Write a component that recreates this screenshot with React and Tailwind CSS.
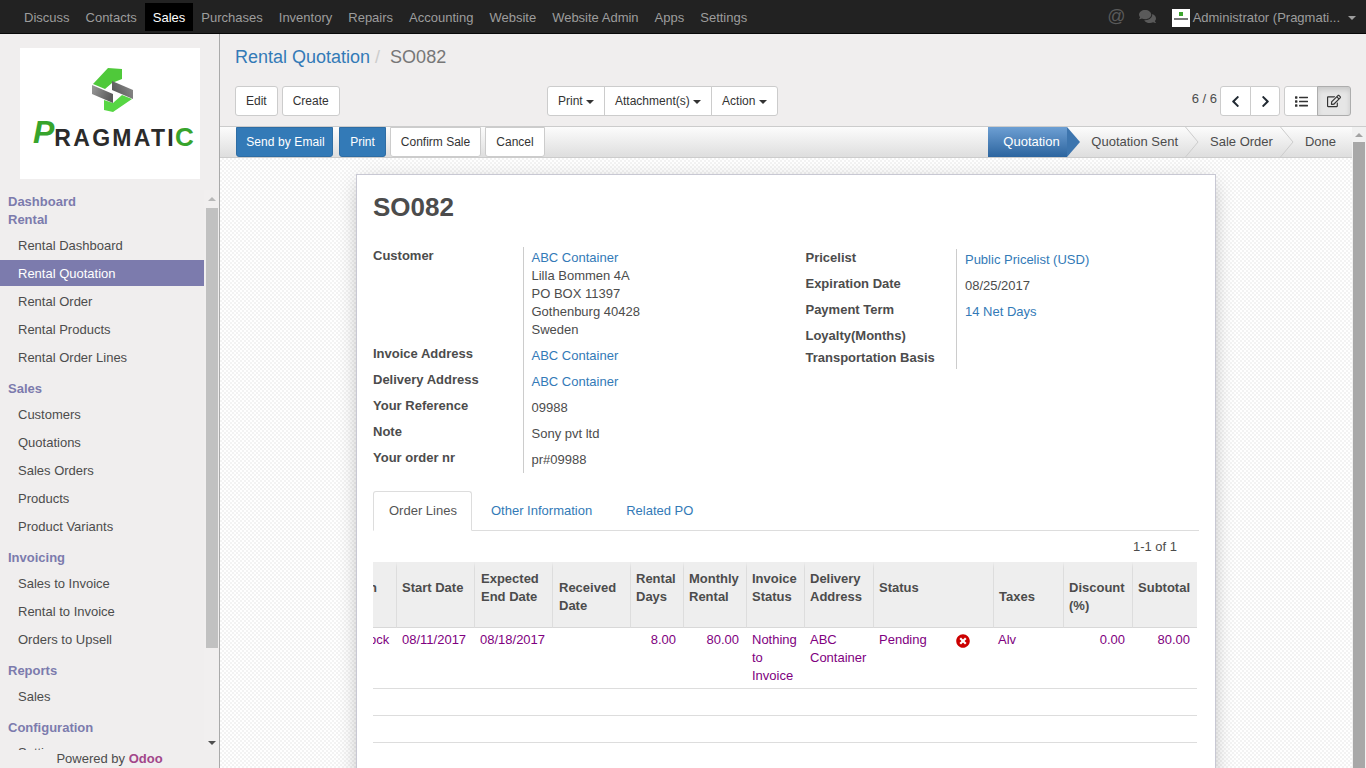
import React from "react";
import { FaComments, FaList, FaRegEdit, FaChevronLeft, FaChevronRight, FaTimesCircle } from "react-icons/fa";

const Caret = ({ cls = "" }) => <span className={`inline-block w-0 h-0 border-x-[4px] border-x-transparent border-t-[4px] border-t-current ${cls}`} />;

const navItems = ["Discuss", "Contacts", "Sales", "Purchases", "Inventory", "Repairs", "Accounting", "Website", "Website Admin", "Apps", "Settings"];

const menu = [
  { h: "Dashboard", cls: "h-[18px] mt-[2px]" },
  { h: "Rental", cls: "h-[18px]" },
  { i: "Rental Dashboard", top: "mt-[3px]" },
  { i: "Rental Quotation", active: true },
  { i: "Rental Order" },
  { i: "Rental Products" },
  { i: "Rental Order Lines" },
  { h: "Sales" },
  { i: "Customers", top: "mt-[3px]" },
  { i: "Quotations" },
  { i: "Sales Orders" },
  { i: "Products" },
  { i: "Product Variants" },
  { h: "Invoicing" },
  { i: "Sales to Invoice", top: "mt-[3px]" },
  { i: "Rental to Invoice" },
  { i: "Orders to Upsell" },
  { h: "Reports" },
  { i: "Sales", top: "mt-[3px]" },
  { h: "Configuration" },
  { i: "Settings", top: "mt-[2px]" },
];

function Logo() {
  return (
    <div className="w-[180px] h-[131px] mt-[14px] ml-[20px] bg-white relative overflow-hidden shrink-0">
      <svg className="absolute left-[65px] top-[14px]" width="55" height="55" viewBox="0 0 55 55">
        <defs>
          <linearGradient id="gl" x1="0" y1="0" x2="1" y2="0.4">
            <stop offset="0" stopColor="#9a9a9a" />
            <stop offset="1" stopColor="#5c5c5c" />
          </linearGradient>
          <linearGradient id="gr" x1="1" y1="0" x2="0" y2="0.4">
            <stop offset="0" stopColor="#8e8e8e" />
            <stop offset="1" stopColor="#5c5c5c" />
          </linearGradient>
        </defs>
        <polygon points="23,6 37,7 37,17 27,21 20,27 8,22" fill="#4fc93a" />
        <polygon points="19,38 28,41 37,33 47,37 28,50 19,48" fill="#57d644" />
        <polygon points="7,23 28,32 28,41 7,32" fill="url(#gl)" />
        <polygon points="27,19 48,28 48,37 27,28" fill="url(#gr)" />
      </svg>
      <div className="absolute left-[13px] top-[65px] flex items-baseline whitespace-nowrap font-['Liberation_Sans',sans-serif] font-bold leading-[44px]">
        <span className="text-[32px] italic text-[#37a42c] inline-block -translate-y-[3px]">P</span>
        <span className="text-[23px] text-[#2b2b2b] tracking-[2.3px]">RAGMATI</span>
        <span className="text-[26px] text-[#37a42c] -ml-[1px]">C</span>
      </div>
    </div>
  );
}

function Sidebar() {
  return (
    <aside className="w-[220px] shrink-0 h-full bg-[#f0eeee] border-r border-[#aaaaaa] flex flex-col">
      <Logo />
      <div className="mt-[11px] flex-1 min-h-0 flex">
        <div className="w-[204px] overflow-hidden pt-[1px]">
          {menu.map((m, idx) =>
            m.h ? (
              <div key={idx} className={`${m.cls || "h-[18px] mt-[10px]"} pl-[8px] leading-[18px] font-bold text-[#7c7bad]`}>{m.h}</div>
            ) : (
              <div key={idx} className={`${m.top || "mt-[2px]"} h-[26px] pl-[18px] leading-[27px] ${m.active ? "bg-[#7c7bad] text-white" : "text-[#4c4c4c]"}`}>{m.i}</div>
            )
          )}
        </div>
        <div className="w-[15px] flex flex-col items-center pl-[2px] pr-[1px] pt-[7px] bg-[#f1efef]">
          <Caret cls="rotate-180 text-[#b8b8b8] mb-[7px]" />
          <div className="w-[12px] h-[440px] bg-[#c1c1c1]" />
          <Caret cls="text-[#505050] mt-[93px]" />
        </div>
      </div>
      <div className="h-[18px] text-center text-[#4c4c4c] leading-[18px] shrink-0">
        Powered by <span className="font-bold text-[#a24689]">Odoo</span>
      </div>
    </aside>
  );
}

const Btn = ({ children, cls = "", primary }) => (
  <button className={`h-[30px] px-[10px] text-[12px] leading-[18px] rounded-[3px] border whitespace-nowrap ${primary ? "bg-[#337ab7] border-[#2e6da4] text-white" : "bg-white border-[#cccccc] text-[#333333]"} ${cls}`}>{children}</button>
);

function ControlPanel() {
  return (
    <div className="h-[93px] shrink-0 bg-[#f0eeee] border-b border-[#cccccc] pl-[15px] pr-[15px]">
      <div className="h-[52px] pt-[10px] text-[18px] leading-[26px] text-[#777777] flex">
        <span className="text-[#337ab7]">Rental Quotation</span>
        <span className="text-[#cccccc] px-[5px]">/</span>
        <span className="ml-[5px]">SO082</span>
      </div>
      <div className="flex items-start">
        <div className="w-[312px] flex gap-[4px]">
          <Btn>Edit</Btn>
          <Btn>Create</Btn>
        </div>
        <div className="flex">
          <Btn cls="rounded-r-none">Print <Caret cls="align-middle" /></Btn>
          <Btn cls="rounded-none -ml-px">Attachment(s) <Caret cls="align-middle" /></Btn>
          <Btn cls="rounded-l-none -ml-px">Action <Caret cls="align-middle" /></Btn>
        </div>
        <div className="ml-auto flex items-center">
          <span className="text-[#4c4c4c] mr-[3px] -mt-[5px]">6 / 6</span>
          <div className="flex">
            <button className="w-[31px] h-[30px] bg-white border border-[#cccccc] rounded-l-[3px] flex items-center justify-center text-[#222a33]"><FaChevronLeft size={13} /></button>
            <button className="w-[30px] h-[30px] -ml-px bg-white border border-[#cccccc] rounded-r-[3px] flex items-center justify-center text-[#222a33]"><FaChevronRight size={13} /></button>
          </div>
          <div className="flex ml-[4px]">
            <button className="w-[34px] h-[30px] bg-white border border-[#cccccc] rounded-l-[3px] flex items-center justify-center text-[#333333]"><FaList size={13} /></button>
            <button className="w-[34px] h-[30px] -ml-px bg-[#e6e6e6] border border-[#adadad] rounded-r-[3px] flex items-center justify-center text-[#333333] shadow-[inset_0_3px_5px_rgba(0,0,0,0.125)]"><FaRegEdit size={14} /></button>
          </div>
        </div>
      </div>
    </div>
  );
}

function StatusBar() {
  const Sep = () => (
    <svg width="14" height="30" viewBox="0 0 14 30" className="shrink-0" fill="none"><path d="M0.5 0 L13 15 L0.5 30" stroke="#cccccc" /></svg>
  );
  return (
    <div className="h-[31px] shrink-0 flex border-b border-[#cccccc] bg-gradient-to-b from-[#fcfcfc] to-[#dedede] pl-[16px]">
      <div className="flex h-[30px] gap-[4px]">
        <Btn primary cls="rounded-t-none w-[97px] !px-0 !pl-[2px] mr-[2px] tracking-[0.1px]">Send by Email</Btn>
        <Btn primary cls="rounded-t-none w-[47px] !px-0">Print</Btn>
        <Btn cls="rounded-t-none w-[91px] !px-0">Confirm Sale</Btn>
        <Btn cls="rounded-t-none w-[60px] !px-0">Cancel</Btn>
      </div>
      <div className="ml-auto flex h-[30px] items-center text-[#4c4c4c]">
        <div className="relative h-[30px] w-[79px] pl-[15px] leading-[30px] text-white bg-gradient-to-b from-[#6d9fd3] to-[#2c659f]">
          Quotation
          <span className="absolute left-full top-0 w-0 h-0 border-y-[15px] border-y-transparent border-l-[13px] border-l-[#3d75ae]" />
        </div>
        <span className="ml-[24px] mr-[7px]">Quotation Sent</span>
        <Sep />
        <span className="ml-[11px] mr-[7px]">Sale Order</span>
        <Sep />
        <span className="ml-[11px] mr-[16px]">Done</span>
      </div>
    </div>
  );
}

const cols = [23, 78, 78, 78, 53, 63, 58, 69, 76, 44, 70, 69, 65];

const th = "border-t-[6px] border-t-[#eeeeee] border-b border-b-[#d8d8d8] bg-[#eeeeee] align-top text-left font-bold text-[#4c4c4c] leading-[18px] pr-[5px]";
const sep = "border-l border-l-[#dddddd]";
const td = "border-b border-[#dddddd] align-top pt-[3px] pb-[0] leading-[18px] text-[#800080] pr-[5px]";

function OrderTable() {
  return (
    <table className="w-[824px] table-fixed border-separate border-spacing-0">
      <colgroup>{cols.map((c, i) => <col key={i} style={{ width: c }} />)}</colgroup>
      <thead>
        <tr>
          <th className={`${th} pt-[11px] h-[66px] overflow-hidden whitespace-nowrap !pr-0`}><span className="inline-block -ml-[4px]">n</span></th>
          <th className={`${th} ${sep} pl-[5px] pt-[11px]`}>Start Date</th>
          <th className={`${th} ${sep} pl-[6px] pt-[2px]`}>Expected End Date</th>
          <th className={`${th} ${sep} pl-[6px] pt-[11px]`}>Received Date</th>
          <th className={`${th} ${sep} pl-[5px] pt-[2px]`}>Rental Days</th>
          <th className={`${th} ${sep} pl-[5px] pt-[2px]`}>Monthly Rental</th>
          <th className={`${th} ${sep} pl-[5px] pt-[2px]`}>Invoice Status</th>
          <th className={`${th} ${sep} pl-[5px] pt-[2px]`}>Delivery Address</th>
          <th colSpan={2} className={`${th} ${sep} pl-[5px] pt-[11px]`}>Status</th>
          <th className={`${th} ${sep} pl-[5px] pt-[20px]`}>Taxes</th>
          <th className={`${th} ${sep} pl-[5px] pt-[11px]`}>Discount (%)</th>
          <th className={`${th} ${sep} pl-[5px] pt-[11px]`}>Subtotal</th>
        </tr>
      </thead>
      <tbody>
        <tr className="h-[61px]">
          <td className={`${td} overflow-hidden whitespace-nowrap !pr-0`}><span className="inline-block -ml-[4px]">ock</span></td>
          <td className={`${td} pl-[6px]`}>08/11/2017</td>
          <td className={`${td} pl-[6px]`}>08/18/2017</td>
          <td className={`${td} pl-[5px]`}></td>
          <td className={`${td} pl-[5px] text-right !pr-[7px]`}>8.00</td>
          <td className={`${td} pl-[5px] text-right !pr-[7px]`}>80.00</td>
          <td className={`${td} pl-[6px]`}>Nothing to Invoice</td>
          <td className={`${td} pl-[6px]`}>ABC Container</td>
          <td className={`${td} pl-[6px]`}>Pending</td>
          <td className={`${td} !pl-[7px] !pt-[6px]`}><FaTimesCircle size={14} className="text-[#cc0000]" /></td>
          <td className={`${td} pl-[5px]`}>Alv</td>
          <td className={`${td} pl-[5px] text-right !pr-[7px]`}>0.00</td>
          <td className={`${td} pl-[5px] text-right !pr-[7px]`}>80.00</td>
        </tr>
        {[0, 1].map((r) => (
          <tr key={r} className="h-[27px]"><td colSpan={13} className="border-b border-[#dddddd]"></td></tr>
        ))}
      </tbody>
    </table>
  );
}

const L = ({ children, cls = "", wide }) => <td className={`${wide ? "w-[151px]" : "w-[150px]"} align-top font-bold text-[#4c4c4c] leading-[18px] ${cls}`}>{children}</td>;
const V = ({ children, cls = "" }) => <td className={`align-top border-l border-[#cccccc] pl-[8px] leading-[18px] text-[#4c4c4c] ${cls}`}>{children}</td>;
const A = ({ children }) => <span className="text-[#337ab7]">{children}</span>;

function Sheet() {
  return (
    <div className="w-[860px] ml-[136px] mt-[16px] bg-white border border-[#c8c8d3] shadow-[0_5px_20px_-5px_rgba(0,0,0,0.35)] pl-[16px] pr-[17px] pb-[60px]">
      <h1 className="text-[26px] leading-[32px] font-bold text-[#4c4c4c] mt-[16px]">SO082</h1>
      <div className="flex mt-[24px]">
        <table className="w-[433px] border-collapse self-start">
          <tbody>
            <tr><L>Customer</L><V cls="pt-[2px] pb-[4px]"><A>ABC Container</A><br />Lilla Bommen 4A<br />PO BOX 11397<br />Gothenburg 40428<br />Sweden</V></tr>
            <tr><L cls="pt-[2px]">Invoice Address</L><V cls="py-[4px]"><A>ABC Container</A></V></tr>
            <tr><L cls="pt-[2px]">Delivery Address</L><V cls="py-[4px]"><A>ABC Container</A></V></tr>
            <tr><L cls="pt-[2px]">Your Reference</L><V cls="py-[4px]">09988</V></tr>
            <tr><L cls="pt-[2px]">Note</L><V cls="py-[4px]">Sony pvt ltd</V></tr>
            <tr><L cls="pt-[2px]">Your order nr</L><V cls="py-[4px]">pr#09988</V></tr>
          </tbody>
        </table>
        <table className="w-[393px] border-collapse self-start mt-[2px]">
          <tbody>
            <tr className="h-[26px]"><L wide>Pricelist</L><V cls="pt-[2px]"><A>Public Pricelist (USD)</A></V></tr>
            <tr className="h-[26px]"><L wide>Expiration Date</L><V cls="pt-[2px]">08/25/2017</V></tr>
            <tr className="h-[26px]"><L wide>Payment Term</L><V cls="pt-[2px]"><A>14 Net Days</A></V></tr>
            <tr className="h-[22px]"><L wide>Loyalty(Months)</L><V></V></tr>
            <tr className="h-[20px]"><L wide>Transportation Basis</L><V></V></tr>
          </tbody>
        </table>
      </div>
      <div className="mt-[18px] -mr-px h-[40px] flex border-b border-[#dddddd]">
        <div className="h-[40px] w-[99px] pl-[15px] border border-[#dddddd] border-b-white bg-white rounded-t-[3px] leading-[38px] text-[#555555]">Order Lines</div>
        <div className="h-[39px] ml-[3px] px-[16px] leading-[40px] text-[#337ab7]">Other Information</div>
        <div className="h-[39px] ml-[2px] px-[16px] leading-[40px] text-[#337ab7]">Related PO</div>
      </div>
      <div className="h-[31px] pr-[21px] text-right leading-[32px] text-[#4c4c4c]">1-1 of 1</div>
      <OrderTable />
    </div>
  );
}

export default function App() {
  return (
    <div className="h-screen w-full overflow-hidden flex flex-col font-['Liberation_Sans',Arial,sans-serif] text-[13px] bg-white">
      <nav className="h-[34px] shrink-0 bg-[#222222] border-b border-[#080808] flex pl-[16px] pr-[16px] pt-[3px]">
        {navItems.map((n) => (
          <div key={n} className={`h-[28px] px-[8px] leading-[29px] ${n === "Sales" ? "bg-black text-white" : "text-[#9d9d9d]"}`}>{n}</div>
        ))}
        <div className="ml-auto flex h-[28px] pt-[2px] items-center text-[#9d9d9d] -mr-[6px]">
          <span className="text-[18px] text-[#5a5a5a] mr-[13px] -mt-[5px] leading-[20px]">@</span>
          <FaComments size={17} className="text-[#5a5a5a] mr-[16px] -mt-[4px]" />
          <div className="w-[18px] h-[18px] bg-white mr-[3px] flex flex-col items-center pt-[3px]">
            <div className="w-[4px] h-[4px] bg-[#3da52e]" />
            <div className="w-[14px] h-[2px] mt-[2px] bg-[#777777]" />
          </div>
          <span>Administrator (Pragmati...</span>
          <Caret cls="ml-[8px]" />
        </div>
      </nav>
      <div className="flex-1 min-h-0 flex">
        <Sidebar />
        <main className="flex-1 min-w-0 flex flex-col">
          <ControlPanel />
          <div className="flex-1 min-h-0 flex">
            <div className="flex-1 min-w-0 flex flex-col">
              <StatusBar />
              <div className="flex-1 min-h-0 overflow-hidden bg-[repeating-conic-gradient(#f3f3f3_0_25%,#ffffff_0_50%)] bg-[length:4px_4px]">
                <Sheet />
              </div>
            </div>
            <div className="w-[14px] shrink-0 bg-[#f1f1f1] flex flex-col items-center pt-[6px]">
              <Caret cls="rotate-180 text-[#a3a3a3] mb-[5px]" />
              <div className="w-[12px] flex-1 bg-[#a8a8a8]" />
            </div>
          </div>
        </main>
      </div>
    </div>
  );
}
